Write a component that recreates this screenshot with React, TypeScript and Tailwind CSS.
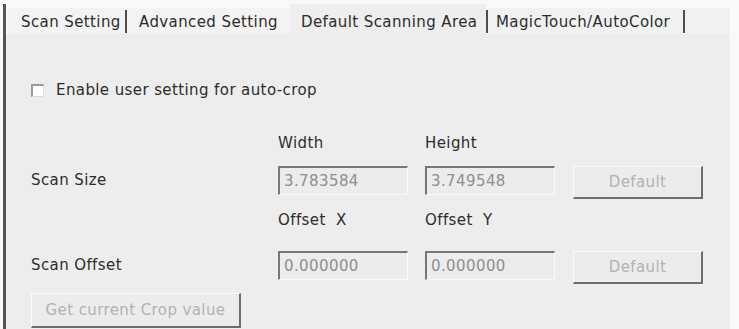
import React from "react";

const font = { fontFamily: '"DejaVu Sans", Verdana, sans-serif' };

function Sep() {
  return <div className="w-[2px] h-[23px] bg-[#4e4e4e] self-end mb-[1px]" />;
}

function Input({ value }: { value: string }) {
  return (
    <div className="w-[130px] h-[29px] border-t-2 border-l-2 border-t-[#777777] border-l-[#777777] border-b border-r border-b-[#fbfbfb] border-r-[#fbfbfb] bg-[#ececec] flex items-center pl-[4px] text-[#8e8e8e]">
      {value}
    </div>
  );
}

function Btn({ label, w, h }: { label: string; w: string; h: string }) {
  return (
    <div
      className={`${w} ${h} border-t border-l border-t-[#fbfbfb] border-l-[#fbfbfb] border-b-2 border-r-2 border-b-[#6e6e6e] border-r-[#6e6e6e] bg-[#ececec] flex items-center justify-center text-[#b2b2b2]`}
    >
      {label}
    </div>
  );
}

export default function App() {
  return (
    <div
      className="w-[739px] h-[329px] overflow-hidden bg-[#f9f9f9] pt-[4px] pl-[3px] text-[15px] tracking-[0.4px] text-[#2c2c2c] leading-none"
      style={font}
    >
      <div className="w-[728px] h-[325px] flex flex-col border-l-[3px] border-l-[#555555]">
        {/* tab strip */}
        <div className="h-[30px] flex items-stretch shrink-0">
          <div className="flex items-stretch bg-[#f3f3f3] mt-[4px] border-l border-l-[#ffffff]">
            <div className="w-[118px] flex items-center pl-[14px] pt-[3px]">Scan Setting</div>
            <Sep />
            <div className="w-[163px] flex items-center pl-[12px] pt-[3px]">Advanced Setting</div>
          </div>
          <div className="w-[196px] bg-[#eeeeee] flex items-center pl-[11px] pt-[6px]">
            Default Scanning Area
          </div>
          <Sep />
          <div className="w-[195px] flex items-stretch bg-[#f1f1f1] mt-[4px]">
            <div className="w-[195px] flex items-center pl-[8px] pt-[3px]">MagicTouch/AutoColor</div>
          </div>
          <Sep />
          <div className="flex-1 bg-[#f1f1f1] mt-[4px] border-r border-r-[#fdfdfd]" />
        </div>

        {/* panel */}
        <div className="flex-1 bg-[#ededed] border-r border-r-[#fdfdfd] pl-[25px] pt-[46px] flex flex-col">
          <div className="h-[20px] flex items-center">
            <div className="w-[13px] h-[13px] border-t-2 border-l-2 border-t-[#9a9a9a] border-l-[#9a9a9a] border-b border-r border-b-[#dddddd] border-r-[#dddddd] bg-white" />
            <span className="ml-[12px]">Enable user setting for auto-crop</span>
          </div>

          <div className="h-[20px] mt-[33px] flex items-center">
            <div className="w-[247px]" />
            <div className="w-[147px]">Width</div>
            <div>Height</div>
          </div>

          <div className="mt-[13px] flex items-start">
            <div className="w-[247px] h-[29px] flex items-center">Scan Size</div>
            <Input value="3.783584" />
            <div className="w-[17px]" />
            <Input value="3.749548" />
            <div className="w-[18px]" />
            <Btn label="Default" w="w-[130px]" h="h-[33px]" />
          </div>

          <div className="h-[20px] mt-[11px] flex items-center">
            <div className="w-[247px]" />
            <div className="w-[147px] whitespace-pre">Offset  X</div>
            <div className="whitespace-pre">Offset  Y</div>
          </div>

          <div className="mt-[21px] flex items-start">
            <div className="w-[247px] h-[29px] flex items-center">Scan Offset</div>
            <Input value="0.000000" />
            <div className="w-[17px]" />
            <Input value="0.000000" />
            <div className="w-[18px]" />
            <Btn label="Default" w="w-[130px]" h="h-[33px]" />
          </div>

          <div className="mt-[9px]">
            <Btn label="Get current Crop value" w="w-[210px]" h="h-[35px]" />
          </div>
        </div>
      </div>
    </div>
  );
}
